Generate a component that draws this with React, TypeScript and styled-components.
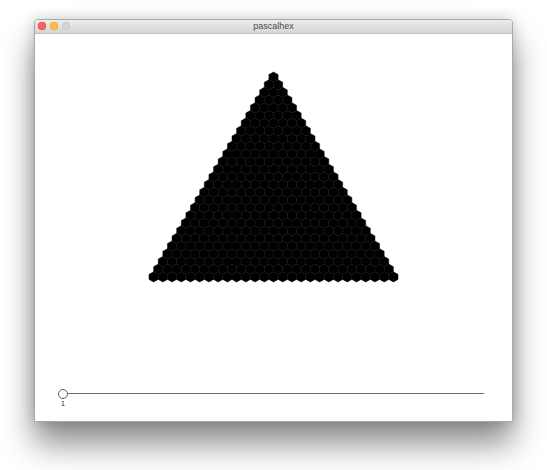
import React from "react";
import styled, { createGlobalStyle } from "styled-components";

const Global = createGlobalStyle`
  html, body { margin: 0; padding: 0; background: #ffffff; }
  body { font-family: "Liberation Sans", Arial, sans-serif; }
`;

const Page = styled.div`
  padding: 19px 0 0 34px;
  width: 547px;
  height: 470px;
  box-sizing: border-box;
  overflow: hidden;
`;

const Window = styled.div`
  width: 479px;
  height: 403px;
  box-sizing: border-box;
  border: 1px solid #a9a9a9;
  border-radius: 4px 4px 1px 1px;
  background: #ffffff;
  box-shadow: 0 22px 32px rgba(0, 0, 0, 0.45), 0 0 14px rgba(0, 0, 0, 0.18);
  display: flex;
  flex-direction: column;
  overflow: hidden;
`;

const TitleBar = styled.div`
  height: 13px;
  flex: none;
  position: relative;
  display: flex;
  align-items: center;
  justify-content: center;
  background: linear-gradient(#ececec, #d6d6d6);
  border-bottom: 1px solid #c2c2c2;
`;

const Lights = styled.div`
  position: absolute;
  left: 3px;
  top: 2px;
  display: flex;
  gap: 4px;
`;

const Light = styled.span<{ $c: string; $b: string }>`
  width: 8px;
  height: 8px;
  border-radius: 50%;
  background: ${(p) => p.$c};
  box-shadow: inset 0 0 0 0.5px ${(p) => p.$b};
`;

const Title = styled.span`
  font-family: "Liberation Sans", Arial, sans-serif;
  font-size: 9px;
  color: #4a4a4a;
  line-height: 1;
`;

const Content = styled.div`
  flex: 1;
  display: flex;
  flex-direction: column;
  background: #ffffff;
`;

const Canvas = styled.svg`
  display: block;
  flex: none;
`;

const SliderRow = styled.div`
  padding: 25px 0 0 23px;
`;

const SliderBox = styled.div`
  position: relative;
  width: 426px;
  height: 10px;
  padding-top: 4px;
  box-sizing: border-box;
`;

const Track = styled.div`
  margin-left: 5px;
  height: 1px;
  background: #6e6e6e;
`;

const Handle = styled.div`
  position: absolute;
  left: 0;
  top: 0;
  width: 10px;
  height: 10px;
  box-sizing: border-box;
  border: 1px solid #5e5e5e;
  border-radius: 50%;
  background: #ffffff;
`;

const Tick = styled.span`
  position: absolute;
  left: 0;
  top: 11px;
  width: 10px;
  text-align: center;
  font-family: "Liberation Sans", Arial, sans-serif;
  font-size: 7px;
  line-height: 1;
  color: #222222;
`;

const ROWS = 27;
const W = 249 / 27;
const DY = 210 / (26 + 4 / 3);
const H = (4 / 3) * DY;
const APEX_X = 238.5;
const TOP = 38;

function hexPoints(cx: number, cy: number): string {
  const hw = W / 2;
  const hh = H / 2;
  const hq = H / 4;
  return [
    [cx, cy - hh],
    [cx + hw, cy - hq],
    [cx + hw, cy + hq],
    [cx, cy + hh],
    [cx - hw, cy + hq],
    [cx - hw, cy - hq],
  ]
    .map(([x, y]) => `${x.toFixed(2)},${y.toFixed(2)}`)
    .join(" ");
}

const hexes: { key: string; pts: string }[] = [];
for (let i = 0; i < ROWS; i++) {
  for (let j = 0; j <= i; j++) {
    const cx = APEX_X + (j - i / 2) * W;
    const cy = TOP + H / 2 + i * DY;
    hexes.push({ key: `${i}-${j}`, pts: hexPoints(cx, cy) });
  }
}

export default function App() {
  return (
    <Page>
      <Global />
      <Window>
        <TitleBar>
          <Lights>
            <Light $c="#fc615d" $b="#de4a45" />
            <Light $c="#fdbc40" $b="#dea034" />
            <Light $c="#d3d3d3" $b="#c4c4c4" />
          </Lights>
          <Title>pascalhex</Title>
        </TitleBar>
        <Content>
          <Canvas width={477} height={330} viewBox="0 0 477 330">
            {hexes.map((h) => (
              <polygon key={h.key} points={h.pts} fill="#000" stroke="#0d0d0d" strokeWidth={0.5} />
            ))}
          </Canvas>
          <SliderRow>
            <SliderBox>
              <Track />
              <Handle />
              <Tick>1</Tick>
            </SliderBox>
          </SliderRow>
        </Content>
      </Window>
    </Page>
  );
}
